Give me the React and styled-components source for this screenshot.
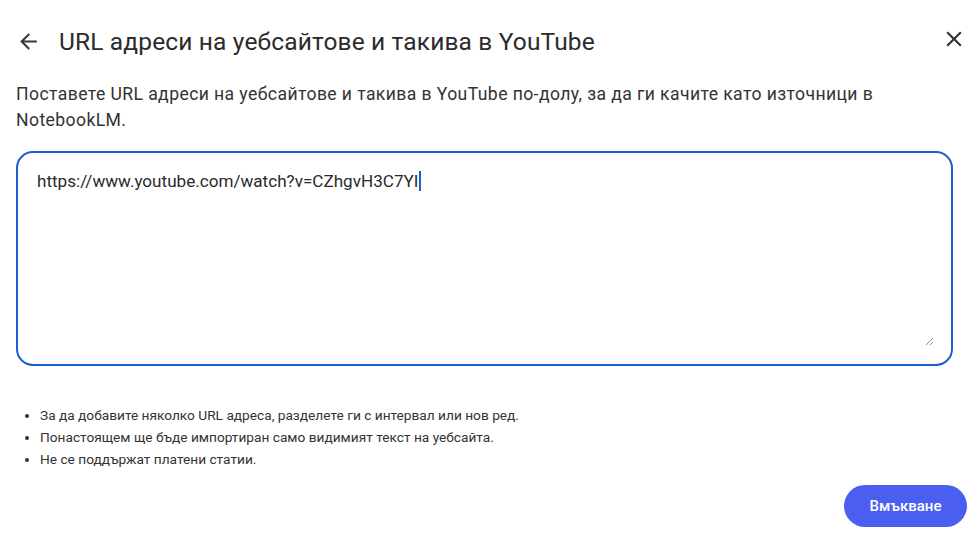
import React from "react";
import styled, { createGlobalStyle } from "styled-components";

const Global = createGlobalStyle`
  html, body { margin: 0; padding: 0; background: #ffffff; }
  body { font-family: "Roboto", "Noto Sans", "Liberation Sans", sans-serif; color: #1f1f1f; }
  * { box-sizing: border-box; }
`;

const Dialog = styled.div`
  width: 980px;
  height: 551px;
  padding: 0 13px 0 16px;
  display: flex;
  flex-direction: column;
  background: #fff;
`;

const Header = styled.div`
  height: 81px;
  padding-top: 1px;
  display: flex;
  align-items: center;
`;

const IconButton = styled.button`
  width: ${(p) => p.$size}px;
  height: ${(p) => p.$size}px;
  padding: 0;
  border: none;
  background: none;
  display: flex;
  align-items: center;
  justify-content: center;
  cursor: pointer;
  margin-top: ${(p) => p.$offset || 0}px;
`;

const Title = styled.h1`
  margin: 0 0 0 18px;
  flex: 1;
  font-size: 24.5px;
  font-weight: 400;
  letter-spacing: 0.15px;
  color: #2b2b2b;
`;

const Description = styled.p`
  margin: 0;
  font-size: 17.6px;
  line-height: 26px;
  letter-spacing: 0.4px;
  color: #333;
  max-width: 900px;
`;

const Field = styled.div`
  position: relative;
  margin-top: 18px;
  width: 937px;
  height: 215px;
  border: 2px solid #1a5fd1;
  border-radius: 17px;
  padding: 16px 19px;
`;

const UrlText = styled.div`
  font-size: 17.1px;
  line-height: 24px;
  color: #2a2a2a;
  display: flex;
  align-items: center;
`;

const Caret = styled.span`
  display: inline-block;
  width: 2px;
  height: 20px;
  background: #1a5fd1;
  margin-left: 1px;
`;

const Resize = styled.svg`
  position: absolute;
  right: 17px;
  bottom: 18px;
`;

const Hints = styled.ul`
  margin: 38px 0 0 0;
  padding: 0 0 0 24px;
  font-size: 13.7px;
  line-height: 22px;
  color: #333;
  li::marker { font-size: 13px; }
`;

const Footer = styled.div`
  display: flex;
  justify-content: flex-end;
  margin-top: 15px;
`;

const PrimaryButton = styled.button`
  width: 123px;
  height: 42px;
  border: none;
  border-radius: 21px;
  background: #4a5ff2;
  color: #fff;
  font-family: inherit;
  font-size: 15px;
  font-weight: 500;
  cursor: pointer;
`;

export default function App() {
  return (
    <>
      <Global />
      <Dialog lang="bg">
        <Header>
          <IconButton $size={25} aria-label="Назад">
            <svg width="25" height="25" viewBox="0 0 24 24">
              <path d="M20 11H7.83l5.59-5.59L12 4l-8 8 8 8 1.41-1.41L7.83 13H20v-2z" fill="#3a3a3a" />
            </svg>
          </IconButton>
          <Title>URL адреси на уебсайтове и такива в YouTube</Title>
          <IconButton $size={26} $offset={-4} aria-label="Затваряне">
            <svg width="26" height="26" viewBox="0 0 24 24">
              <path d="M19 6.41 17.59 5 12 10.59 6.41 5 5 6.41 10.59 12 5 17.59 6.41 19 12 13.41 17.59 19 19 17.59 13.41 12z" fill="#333" />
            </svg>
          </IconButton>
        </Header>
        <Description>
          Поставете URL адреси на уебсайтове и такива в YouTube по-долу, за да ги качите като източници в NotebookLM.
        </Description>
        <Field>
          <UrlText>
            https://www.youtube.com/watch?v=CZhgvH3C7YI
            <Caret />
          </UrlText>
          <Resize width="9" height="9" viewBox="0 0 9 9">
            <path d="M1 8 8 1M5 8 8 5" stroke="#888" strokeWidth="1" />
          </Resize>
        </Field>
        <Hints>
          <li>За да добавите няколко URL адреса, разделете ги с интервал или нов ред.</li>
          <li>Понастоящем ще бъде импортиран само видимият текст на уебсайта.</li>
          <li>Не се поддържат платени статии.</li>
        </Hints>
        <Footer>
          <PrimaryButton>Вмъкване</PrimaryButton>
        </Footer>
      </Dialog>
    </>
  );
}
